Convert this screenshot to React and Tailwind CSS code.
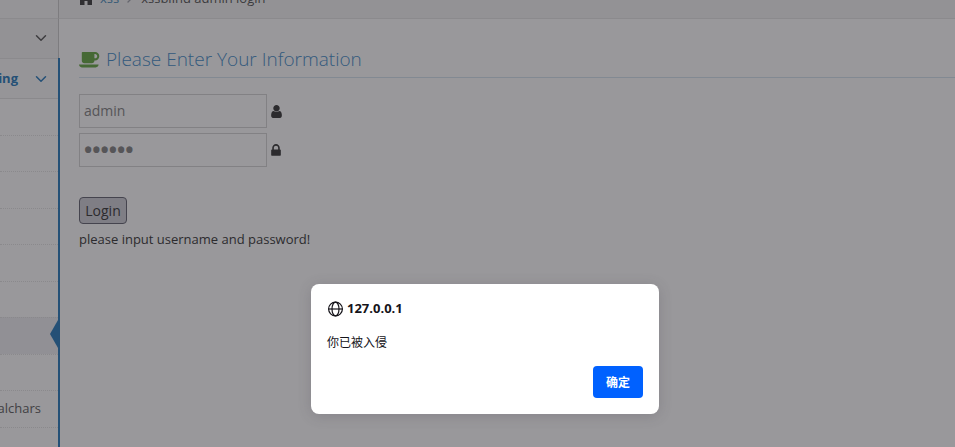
import { ChevronDown, ChevronRight } from "lucide-react";

// Sub menu entries, only the end of a long label reaches the visible strip
const subItems = [
  { id: 1 },
  { id: 2 },
  { id: 3 },
  { id: 4 },
  { id: 5 },
  { id: 6 },
  { id: 7, active: true },
  { id: 8 },
  { id: 9, label: "alchars" },
  { id: 10 },
];

const HomeIcon = () => (
  <svg viewBox="0 0 14 14" className="size-[14px] fill-[#404040]" aria-hidden="true">
    <path d="M7 1L0 7h1v7h4.500v-4h3v4H13V7h1L12 5V2h-2v1.500z" />
  </svg>
);

const CoffeeIcon = () => (
  <svg viewBox="0 0 1920 1792" className="h-5 w-[21px] fill-[#69aa46]" aria-hidden="true">
    <path d="M1664 640q0-80-56-136t-136-56h-64v384h64q80 0 136-56t56-136zm-1664 768h1792q0 106-75 181t-181 75h-1280q-106 0-181-75t-75-181zm1856-768q0 159-112.5 271.5t-271.5 112.5h-64v32q0 92-66 158t-158 66h-704q-92 0-158-66t-66-158v-736q0-26 19-45t45-19h1152q159 0 271.5 112.5t112.5 271.5z" />
  </svg>
);

const UserIcon = () => (
  <svg viewBox="256 0 1280 1792" className="h-[15px] w-[11px] fill-[#393939]" aria-hidden="true">
    <path d="M1536 1399q0 109-62.5 187t-150.5 78h-854q-88 0-150.5-78t-62.5-187q0-85 8.5-160.5t31.5-152 58.5-131 94-89 134.5-34.5q131 128 313 128t313-128q76 0 134.5 34.5t94 89 58.5 131 31.5 152 8.5 160.5zm-256-887q0 159-112.5 271.5t-271.5 112.5-271.5-112.5-112.5-271.5 112.5-271.5 271.5-112.5 271.5 112.5 112.5 271.5z" />
  </svg>
);

const LockIcon = () => (
  <svg viewBox="320 0 1152 1792" className="h-[15px] w-[10px] fill-[#393939]" aria-hidden="true">
    <path d="M640 768h512v-192q0-106-75-181t-181-75-181 75-75 181v192zm832 96v576q0 40-28 68t-68 28h-960q-40 0-68-28t-28-68v-576q0-40 28-68t68-28h32v-192q0-184 132-316t316-132 316 132 132 316v192h32q40 0 68 28t28 68z" />
  </svg>
);

const GlobeIcon = () => (
  <svg viewBox="0 0 16 16" className="size-4 fill-none stroke-[#15141a]" strokeWidth="1.2" aria-hidden="true">
    <circle cx="8.500" cy="8" r="6.900" />
    <ellipse cx="8.500" cy="8" rx="3.500" ry="6.900" />
    <path d="M1.600 8h13.800" />
  </svg>
);

function Sidebar() {
  return (
    <nav className="flex w-[60px] shrink-0 flex-col">
      <div className="mr-px h-[18px] border-r border-[#ccc] bg-[#f8f8f8]" />
      <button
        type="button"
        aria-label="Toggle menu"
        className="mr-px flex h-10 items-center justify-end border-t border-r border-t-[#e5e5e5] border-r-[#ccc] bg-[#f5f5f5] pr-2 pb-px text-[#585858]"
      >
        <ChevronDown className="size-[18px]" />
      </button>
      <div className="flex-1 border-r-2 border-[#2b7dbc] bg-white">
        <button
          type="button"
          className="flex h-10 w-full items-center justify-end gap-[14px] border-t border-[#e5e5e5] bg-[#fafafa] pr-2 text-[13px] font-bold text-[#2b7dbc]"
        >
          ing
          <ChevronDown className="size-[18px] shrink-0" />
        </button>
        <ul>
          {subItems.map((item) => (
            <li
              key={item.id}
              className={`relative flex items-center justify-end border-t border-dotted border-[#e4e4e4] pr-[17px] odd:h-[37px] even:h-9 first:border-solid ${
                item.active ? "bg-[#f0f0f4]" : ""
              }`}
            >
              {item.label && (
                <a href="#chars" className="text-[13px] text-[#616161]">
                  {item.label}
                </a>
              )}
              {item.active && (
                <svg viewBox="0 0 8 28" className="absolute top-0.5 right-0 h-7 w-2 fill-[#2b7dbc]" aria-hidden="true">
                  <path d="M8 0v28L0 14z" />
                </svg>
              )}
            </li>
          ))}
        </ul>
      </div>
    </nav>
  );
}

function LoginForm() {
  return (
    <form className="text-sm" onSubmit={(e) => e.preventDefault()}>
      <div className="flex flex-col gap-[5px]">
        <div className="flex items-center gap-1">
          <input
            id="username"
            type="text"
            defaultValue="admin"
            className="h-[34px] w-[188px] border border-[#d5d5d5] bg-white px-1 pb-0.5 text-[#858585]"
          />
          <label htmlFor="username" aria-label="Username">
            <UserIcon />
          </label>
        </div>
        <div className="flex items-center gap-1">
          <input
            id="password"
            type="password"
            defaultValue="123456"
            className="h-[34px] w-[188px] border border-[#d5d5d5] bg-white px-1 pb-0.5 text-[22px] font-bold text-[#858585]"
          />
          <label htmlFor="password" aria-label="Password">
            <LockIcon />
          </label>
        </div>
      </div>
      <button
        type="submit"
        className="mt-[30px] h-[27px] w-12 rounded border border-[#676774] bg-[#d0d0d7] text-[#393939]"
      >
        Login
      </button>
      <p className="mt-[5px] text-[13px] leading-5 text-[#393939]">
        please input username and password!
      </p>
    </form>
  );
}

function AlertDialog() {
  return (
    <div
      role="alertdialog"
      aria-labelledby="alert-title"
      aria-describedby="alert-text"
      className="absolute top-[284px] left-[311px] w-[348px] rounded-lg bg-white p-4 text-xs text-[#15141a] shadow-[0_2px_14px_rgba(58,57,68,0.2)]"
    >
      <h2 id="alert-title" className="flex h-[18px] items-center gap-1 text-[13px] font-bold">
        <GlobeIcon />
        127.0.0.1
      </h2>
      <p id="alert-text" className="mt-4 leading-[18px]">
        你已被入侵
      </p>
      <div className="mt-[14px] flex justify-end">
        <button type="button" className="h-8 w-[50px] rounded bg-[#0061ff] pt-0.5 font-bold text-white">
          确定
        </button>
      </div>
    </div>
  );
}

export default function App() {
  return (
    <div className="relative flex min-h-screen overflow-hidden bg-white font-['Open_Sans','Noto_Sans_CJK_SC',sans-serif]">
      <Sidebar />
      <main className="-ml-px min-w-0 flex-1">
        {/* Breadcrumbs */}
        <div className="flex h-[19px] items-end border-b border-[#e5e5e5] bg-[#f5f5f5] pb-[10px] pl-5 text-[13px] leading-5">
          <div className="flex items-center">
            <HomeIcon />
            <a href="#xss" className="ml-[7px] text-[#4c8fbd]">
              xss
            </a>
            <ChevronRight className="mx-[3px] size-4 text-[#a0a4ad]" />
            <span className="text-[#555]">xssblind admin login</span>
          </div>
        </div>
        <div className="pt-[30px] pl-5">
          <h1 className="mb-4 flex h-[29px] items-start gap-[6px] border-b border-[#d5e3ef] text-[19px] leading-5 font-light text-[#478fca]">
            <CoffeeIcon />
            Please Enter Your Information
          </h1>
          <LoginForm />
        </div>
      </main>
      <div className="pointer-events-none absolute inset-0 bg-[rgb(28_27_34/45%)]" />
      <AlertDialog />
    </div>
  );
}
